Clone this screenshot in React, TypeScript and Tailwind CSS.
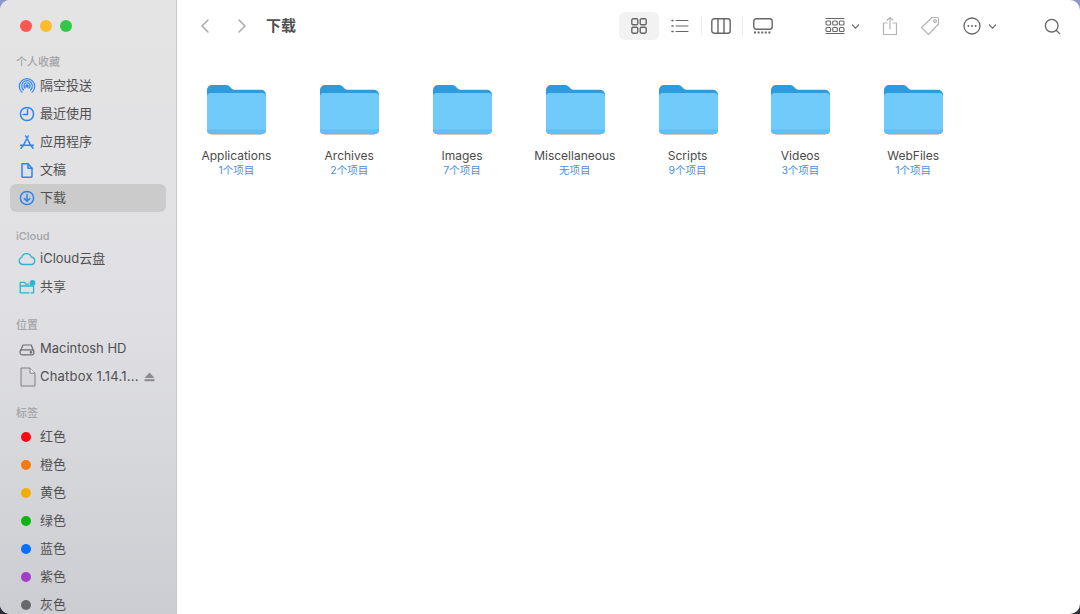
import { ChevronDown, ChevronLeft, ChevronRight, Search } from "lucide-react";
import type { ReactNode } from "react";

const BLUE = "#2a84f5";
const TEAL = "#2bb5d0";

// ── icons ─────────────────────────────────────────────────────────────────────

function Line({ children, color = BLUE, size = 18 }: { children: ReactNode; color?: string; size?: number }) {
  return (
    <svg width={size} height={size} viewBox="0 0 18 18" fill="none" stroke={color} strokeWidth="1.5" strokeLinecap="round" strokeLinejoin="round">
      {children}
    </svg>
  );
}

const AirDrop = () => (
  <Line>
    <path d="M4 15.2a7.7 7.7 0 1 1 10 0" strokeWidth="1.2" />
    <path d="M5.5 13a5.3 5.3 0 1 1 7 0" strokeWidth="1.2" />
    <path d="M7 11a3 3 0 1 1 4 0" strokeWidth="1.2" />
    <circle cx="9" cy="9" r="1" fill={BLUE} />
  </Line>
);
const Recents = () => (
  <Line>
    <circle cx="9" cy="9" r="6.6" />
    <path d="M9.5 4.8v4.7H5.2" />
  </Line>
);
const Apps = () => (
  <Line>
    <path d="M10.2 3 5 13M7.8 3 13 13M2.6 12.2h12.8M3 15.2l1.5-2M15 15.2l-1.5-2" />
  </Line>
);
const Doc = () => (
  <Line>
    <path d="M4 2.8h6l4 4.4v8.2a.8.8 0 0 1-.8.8H4.8a.8.8 0 0 1-.8-.8z" />
    <path d="M10 2.8v4.4h4" />
  </Line>
);
const Download = () => (
  <Line>
    <circle cx="9" cy="9" r="6.6" />
    <path d="M9 5.2v7M6.3 9.6 9 12.3l2.7-2.7" />
  </Line>
);
const Cloud = () => (
  <Line color={TEAL}>
    <path d="M4.6 14.5a3.6 3.6 0 0 1-.9-7 5 5 0 0 1 9.6-.5 3.8 3.8 0 0 1 .4 7.5z" strokeWidth="1.3" />
  </Line>
);
const Shared = () => (
  <Line color={TEAL}>
    <path d="M11 14.8H2.2V4.4h4.4l1.2 1.7h2.8" strokeWidth="1.3" />
    <path d="M2.2 8h13.4v6.8H13" strokeWidth="1.3" />
    <circle cx="14.5" cy="4.8" r="2.9" fill={TEAL} stroke="none" />
  </Line>
);
const Disk = () => (
  <Line color="#6f6f72">
    <path d="M2.6 10.5 5 5h8.2l2.2 5.5" strokeWidth="1.2" />
    <rect x="2" y="9.8" width="14" height="5" rx="2.2" strokeWidth="1.2" />
    <circle cx="13" cy="12.3" r="0.6" fill="#6f6f72" />
  </Line>
);
const DmgFile = () => (
  <svg width="16" height="20" viewBox="0 0 16 20" fill="#d8d8da" stroke="#77777a" strokeWidth="0.9" strokeLinejoin="round" className="ml-[2px]">
    <path d="M1 1h9l5 5.2V19H1z" />
    <path d="M10 1v5.2h5" fill="#f0f0f0" />
  </svg>
);
const Eject = () => (
  <svg width="11" height="10" viewBox="0 0 11 10" fill="#8b8b8e">
    <path d="M5.5 0.5 10.5 6H0.5z" />
    <rect x="0.5" y="7.2" width="10" height="2" />
  </svg>
);

function ToolSvg({ w, h, children }: { w: number; h: number; children: ReactNode }) {
  return (
    <svg width={w} height={h} viewBox={`0 0 ${w} ${h}`} fill="none" stroke="#666666" strokeWidth="1.4" strokeLinecap="round" strokeLinejoin="round">
      {children}
    </svg>
  );
}

function Folder() {
  return (
    <svg width="62" height="54" viewBox="0 0 62 54">
      {/* back tab */}
      <path d="M2 8a5 5 0 0 1 5-5h13.5c2 0 3.2.6 4.6 1.9 1.4 1.3 2.4 2.8 4.4 2.8H56a5 5 0 0 1 5 5V30H2z" fill="#2d9bdc" />
      {/* front panel */}
      <path d="M2 14.5a3.5 3.5 0 0 1 3.5-3.5h52a3.5 3.5 0 0 1 3.5 3.5V48a4 4 0 0 1-4 4H6a4 4 0 0 1-4-4z" fill="#70cbfb" />
      <path d="M2 47.5h59V48a4 4 0 0 1-4 4H6a4 4 0 0 1-4-4z" fill="#62bdf0" />
      <path d="M6 52.5h51" stroke="#c9c9c9" strokeWidth="1" />
    </svg>
  );
}

// ── sidebar ───────────────────────────────────────────────────────────────────

function SectionLabel({ children, className = "" }: { children: ReactNode; className?: string }) {
  return <div className={`pl-4 text-[11px] leading-4 font-medium text-[#a3a3a7] ${className}`}>{children}</div>;
}

function Item({
  icon,
  label,
  active,
  trailing,
  labelClass = "",
}: {
  icon: ReactNode;
  label: string;
  active?: boolean;
  trailing?: ReactNode;
  labelClass?: string;
}) {
  return (
    <div className={`mx-2.5 flex h-[28px] items-center rounded-md pl-2 pr-[11px] ${active ? "bg-[#cbcbcb]" : ""}`}>
      <div className="flex w-[22px] shrink-0 items-center justify-start">{icon}</div>
      <span className={`flex-1 whitespace-nowrap text-[13px] text-[#505052] ${labelClass}`}>{label}</span>
      {trailing}
    </div>
  );
}

const Dot = ({ className }: { className: string }) => (
  <span className={`ml-[3px] block h-2.5 w-2.5 rounded-full ${className}`} />
);

const TAGS = [
  { label: "红色", color: "bg-[#fb0a14]" },
  { label: "橙色", color: "bg-[#f47a0c]" },
  { label: "黄色", color: "bg-[#efad08]" },
  { label: "绿色", color: "bg-[#0cb50f]" },
  { label: "蓝色", color: "bg-[#0a6ffb]" },
  { label: "紫色", color: "bg-[#a23dc8]" },
  { label: "灰色", color: "bg-[#68686c]" },
];

function Sidebar() {
  return (
    <aside className="h-full w-[177px] shrink-0 overflow-hidden border-r border-[#c8c8ca] bg-gradient-to-b from-[#e4e4e4] via-[#e0e0e4] to-[#cccdd2]">
      <div className="flex h-[52px] items-start gap-2 pl-5 pt-5">
        <span className="h-3 w-3 rounded-full bg-[#fc5753]" />
        <span className="h-3 w-3 rounded-full bg-[#fdbc2e]" />
        <span className="h-3 w-3 rounded-full bg-[#33c748]" />
      </div>
      <SectionLabel className="mt-[2px] mb-[2px]">个人收藏</SectionLabel>
      <Item icon={<AirDrop />} label="隔空投送" />
      <Item icon={<Recents />} label="最近使用" />
      <Item icon={<Apps />} label="应用程序" />
      <Item icon={<Doc />} label="文稿" />
      <Item icon={<Download />} label="下载" active />
      <SectionLabel className="mt-[16px] mb-[1px]">iCloud</SectionLabel>
      <Item icon={<Cloud />} label="iCloud云盘" />
      <Item icon={<Shared />} label="共享" />
      <SectionLabel className="mt-[16px] mb-[2px]">位置</SectionLabel>
      <Item icon={<Disk />} label="Macintosh HD" />
      <Item icon={<DmgFile />} label="Chatbox 1.14.1..." labelClass="tracking-[0.2px]" trailing={<Eject />} />
      <SectionLabel className="mt-[14px] mb-[2px]">标签</SectionLabel>
      {TAGS.map((t) => (
        <Item key={t.label} icon={<Dot className={t.color} />} label={t.label} />
      ))}
    </aside>
  );
}

// ── toolbar ───────────────────────────────────────────────────────────────────

const GroupGlyph = () => (
  <ToolSvg w={20} h={18}>
    <g strokeWidth="1.1">
      <path d="M1 1.5h18M1 16.5h18" strokeWidth="1" />
      <rect x="1" y="4" width="4.6" height="4" rx="1" />
      <rect x="7.7" y="4" width="4.6" height="4" rx="1" />
      <rect x="14.4" y="4" width="4.6" height="4" rx="1" />
      <rect x="1" y="10.5" width="4.6" height="4" rx="1" />
      <rect x="7.7" y="10.5" width="4.6" height="4" rx="1" />
      <rect x="14.4" y="10.5" width="4.6" height="4" rx="1" />
    </g>
  </ToolSvg>
);

function Toolbar() {
  return (
    <div className="flex h-[52px] items-center pl-[16px]">
      <ChevronLeft size={24} strokeWidth={1.5} className="text-[#a9a9a9]" />
      <ChevronRight size={24} strokeWidth={1.5} className="ml-[13px] text-[#a9a9a9]" />
      <h1 className="ml-[12px] text-[15px] font-bold text-[#505050]">下载</h1>

      <div className="ml-[323px] flex h-[28px] w-[40px] items-center justify-center rounded-md bg-[#f2f2f2]">
        <ToolSvg w={16} h={16}>
          <rect x="0.8" y="0.8" width="6" height="6" rx="1.4" />
          <rect x="9.2" y="0.8" width="6" height="6" rx="1.4" />
          <rect x="0.8" y="9.2" width="6" height="6" rx="1.4" />
          <rect x="9.2" y="9.2" width="6" height="6" rx="1.4" />
        </ToolSvg>
      </div>
      <div className="flex w-[42px] justify-center">
        <ToolSvg w={18} h={14}>
          <path d="M5 1.5h12M5 7h12M5 12.5h12" strokeWidth="1.1" />
          <path d="M1 1.5h1M1 7h1M1 12.5h1" strokeWidth="1.6" />
        </ToolSvg>
      </div>
      <div className="h-[20px] w-px bg-[#ececec]" />
      <div className="flex w-[40px] justify-center pr-[2px]">
        <ToolSvg w={20} h={16}>
          <rect x="0.8" y="0.8" width="18.4" height="14.4" rx="2.5" />
          <path d="M7 1v14M13 1v14" />
        </ToolSvg>
      </div>
      <div className="h-[20px] w-px bg-[#ececec]" />
      <div className="flex w-[39px] justify-center">
        <ToolSvg w={20} h={16}>
          <rect x="0.8" y="0.8" width="18.4" height="10.4" rx="2.5" />
          <path d="M1 14.5h18" strokeWidth="1.8" strokeDasharray="2 1.6" strokeLinecap="butt" />
        </ToolSvg>
      </div>

      <div className="ml-[43px] flex items-center">
        <GroupGlyph />
        <ChevronDown size={13} strokeWidth={2.2} className="ml-[4px] text-[#666666]" />
      </div>

      <div className="ml-[20px]">
        <svg width="16" height="20" viewBox="0 0 16 20" fill="none" stroke="#b4b4b4" strokeWidth="1.2" strokeLinecap="round" strokeLinejoin="round">
          <path d="M5 7H1.5v11.5h13V7H11" />
          <path d="M8 13V1.5M5 4.2 8 1.5l3 2.7" />
        </svg>
      </div>
      <div className="ml-[22px]">
        <svg width="20" height="20" viewBox="0 0 20 20" fill="none" stroke="#b4b4b4" strokeWidth="1.2" strokeLinejoin="round">
          <path d="M12 1.5h5a1.5 1.5 0 0 1 1.5 1.5v5L8.5 18.5 1.5 11.5z" />
          <circle cx="15" cy="5" r="1.4" />
        </svg>
      </div>

      <div className="ml-[23px] flex items-center">
        <svg width="18" height="18" viewBox="0 0 18 18" fill="none" stroke="#666666" strokeWidth="1.3">
          <circle cx="9" cy="9" r="8" />
          <circle cx="5.4" cy="9" r="1" fill="#666666" stroke="none" />
          <circle cx="9" cy="9" r="1" fill="#666666" stroke="none" />
          <circle cx="12.6" cy="9" r="1" fill="#666666" stroke="none" />
        </svg>
        <ChevronDown size={13} strokeWidth={2.2} className="ml-[5px] text-[#666666]" />
      </div>

      <Search size={19} strokeWidth={1.7} className="ml-[44px] text-[#666666]" />
    </div>
  );
}

// ── main ──────────────────────────────────────────────────────────────────────

const FOLDERS = [
  { name: "Applications", count: "1个项目" },
  { name: "Archives", count: "2个项目" },
  { name: "Images", count: "7个项目" },
  { name: "Miscellaneous", count: "无项目" },
  { name: "Scripts", count: "9个项目" },
  { name: "Videos", count: "3个项目" },
  { name: "WebFiles", count: "1个项目" },
];

export default function App() {
  return (
    <div className="h-[614px] w-[1080px] overflow-hidden bg-gradient-to-b from-[#8d97cc] to-[#2e2e38] font-['Inter','Noto_Sans_CJK_SC',sans-serif]">
      <div className="flex h-full w-full overflow-hidden rounded-[10px] bg-white">
        <Sidebar />
        <main className="flex-1">
          <Toolbar />
          <div className="flex pl-[3px] pt-[30px]">
            {FOLDERS.map((f) => (
              <div key={f.name} className="flex w-[112.8px] flex-col items-center">
                <Folder />
                <div className="mt-[12px] text-[12px] leading-[15px] whitespace-nowrap text-[#4a4a4a]">{f.name}</div>
                <div className="text-[10.5px] leading-[15px] text-[#4a8fe0]">{f.count}</div>
              </div>
            ))}
          </div>
        </main>
      </div>
    </div>
  );
}
